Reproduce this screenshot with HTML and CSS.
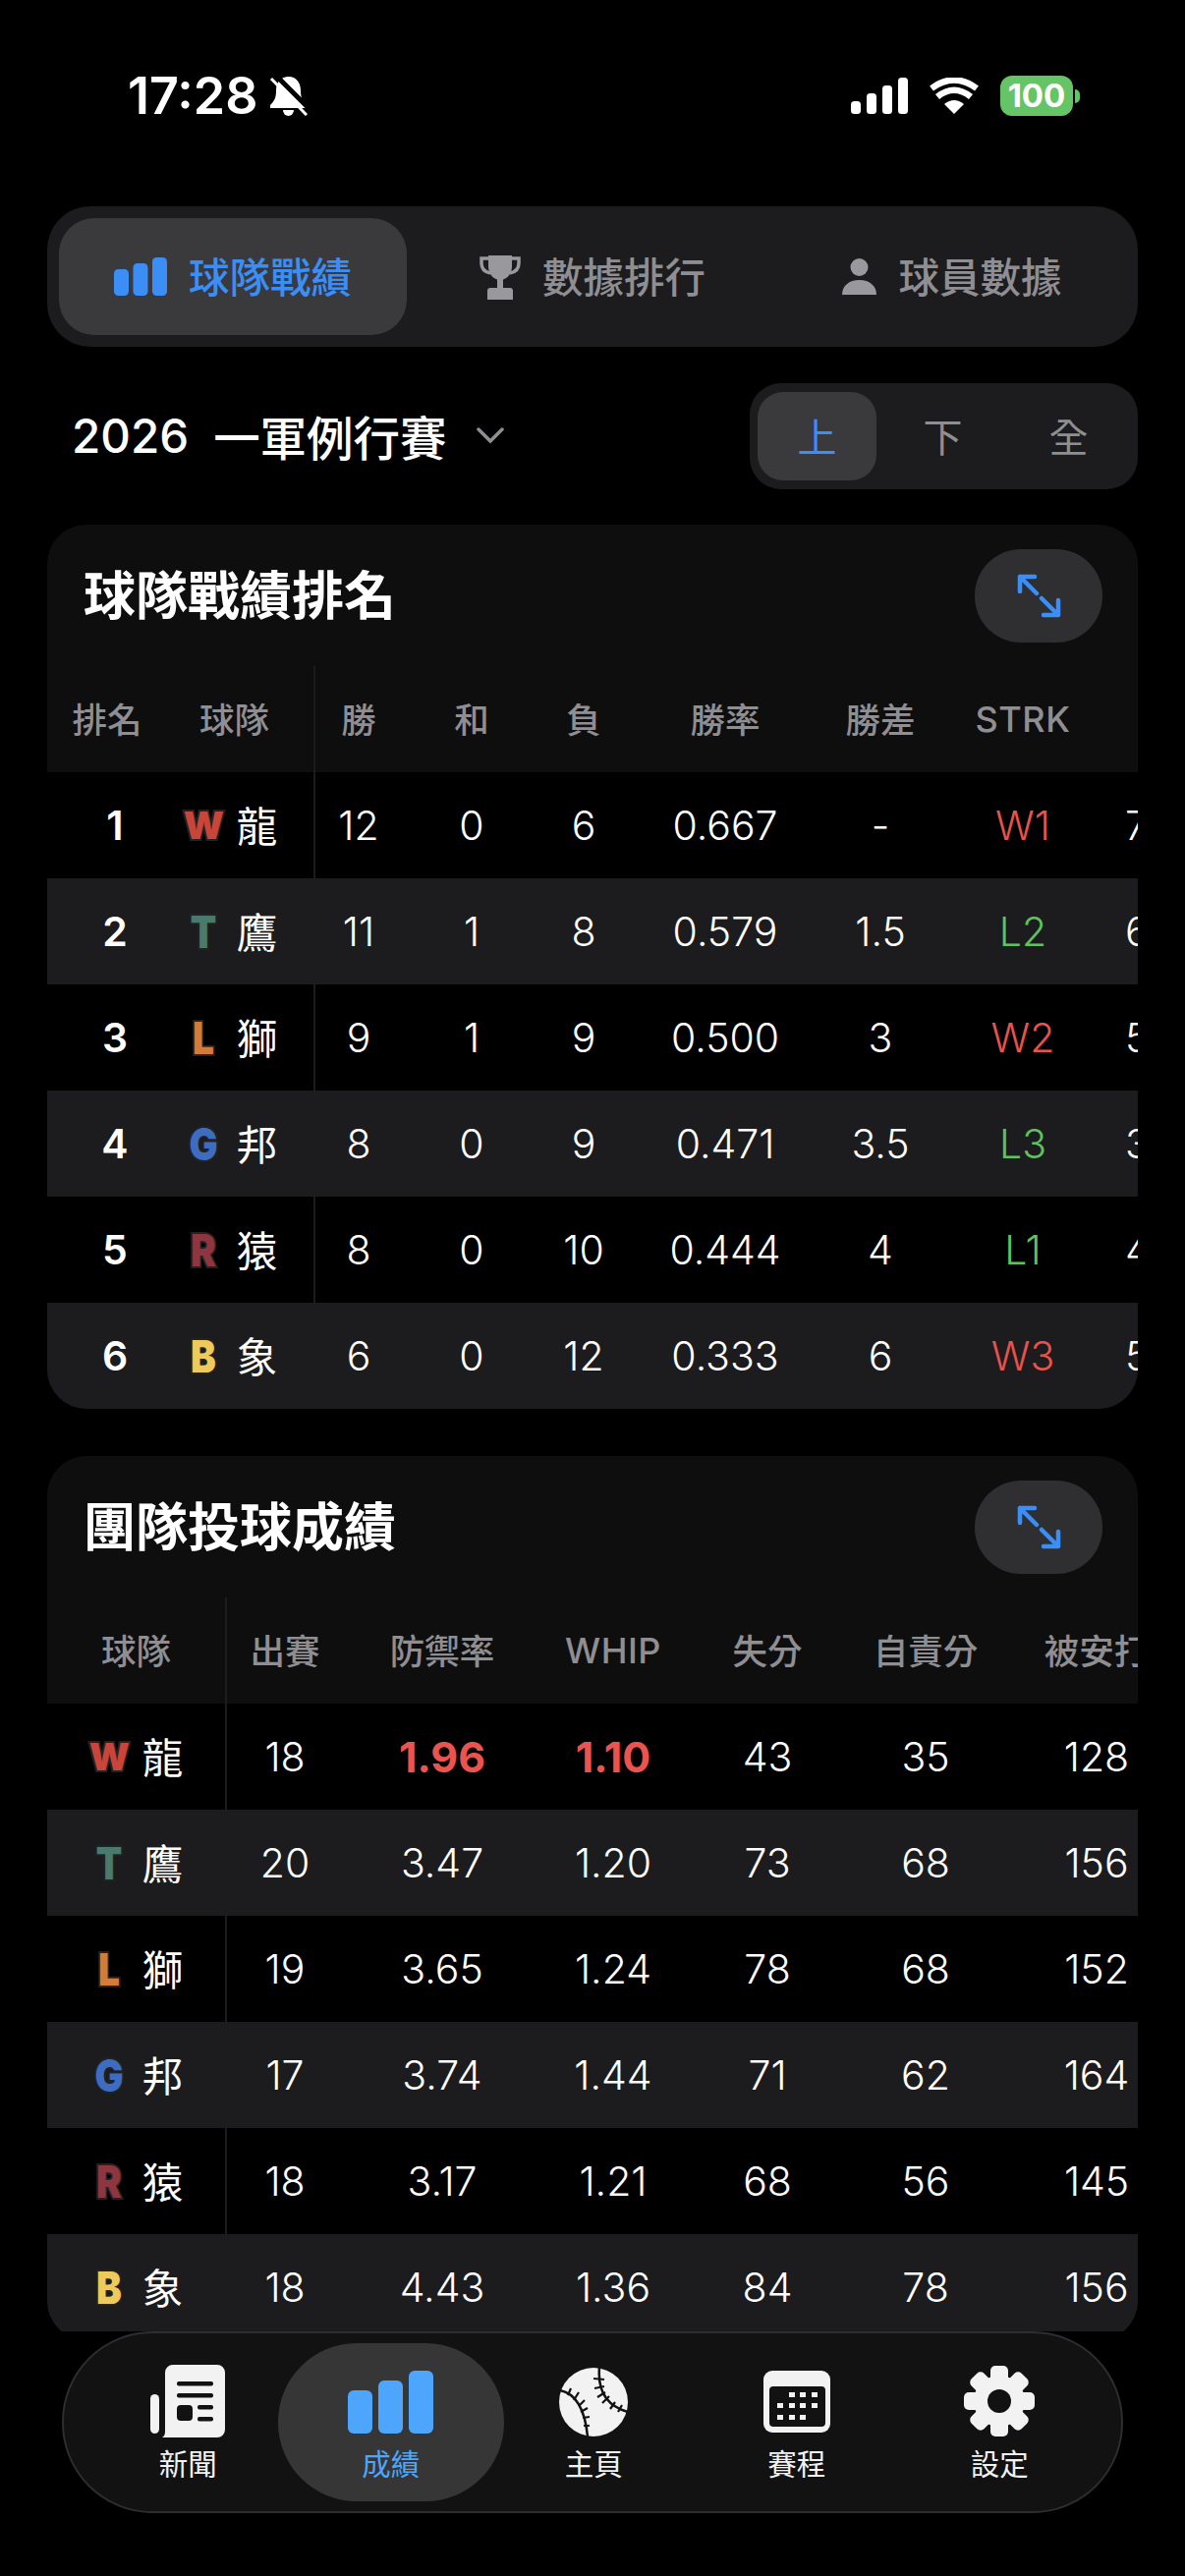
FILE: index.html
```html
<!DOCTYPE html>
<html lang="zh-Hant">
<head>
    <meta charset="UTF-8">
    <meta name="viewport" content="width=device-width, initial-scale=1.0">
    <title>球隊戰績</title>
    <link rel="stylesheet" href="styles.css">
</head>
<body>
    <div class="content">
        <div class="status-bar">
            <span class="time">17:28</span>
            <svg class="bell" viewBox="0 0 39 41">
                <path fill="#fff" d="M20 1c-8 0-13 6-13 14 0 8-2 11-6 15v3h37v-3c-4-4-6-7-6-15 0-8-5-14-12-14z"/>
                <path fill="#fff" d="M14 35a5.5 6 0 0 0 11 0z"/>
                <path stroke="#000" stroke-width="5" d="M6 -1L40 33"/>
                <path stroke="#fff" stroke-width="3" d="M2 3L38 40"/>
            </svg>
            <span class="status-spacer"></span>
            <svg class="signal" viewBox="0 0 58 37" fill="#fff">
                <rect x="0" y="24" width="10" height="13" rx="3.5"/>
                <rect x="16" y="16" width="10" height="21" rx="3.5"/>
                <rect x="32" y="8" width="10" height="29" rx="3.5"/>
                <rect x="48" y="0" width="10" height="37" rx="3.5"/>
            </svg>
            <svg class="wifi" viewBox="0 0 50 37">
                <path fill="#fff" d="M25 37L15 27Q25 19 35 27z"/>
                <path fill="none" stroke="#fff" stroke-width="6.5" d="M8 19.5Q25 6 42 19.5"/>
                <path fill="none" stroke="#fff" stroke-width="6.5" d="M2 11Q25 -6 48 11"/>
            </svg>
            <span class="battery">100</span>
            <span class="battery-nub"></span>
        </div>

        <div class="tabs">
            <div class="tab active">
                <svg class="tab-bars" viewBox="0 0 54 39" fill="#3a8ef6">
                    <rect x="0" y="12" width="15" height="27" rx="4.5"/>
                    <rect x="19.5" y="6" width="15" height="33" rx="4.5"/>
                    <rect x="39" y="0" width="15" height="39" rx="4.5"/>
                </svg>
                <span>球隊戰績</span>
            </div>
            <div class="tab">
                <svg class="tab-trophy" viewBox="0 0 42 46" fill="#98989d">
                    <path d="M9 1h24v11c0 7-4 12-9 13.5V34h-6v-8.500C13 24 9 19 9 12z"/>
                    <path d="M8 37a3 3 0 0 1 3-3h20a3 3 0 0 1 3 3v9H8z"/>
                    <path fill="none" stroke="#98989d" stroke-width="3.5" d="M10 4H2v5c0 6 4 9 9 10M32 4h8v5c0 6-4 9-9 10"/>
                </svg>
                <span>數據排行</span>
            </div>
            <div class="tab">
                <svg class="tab-person" viewBox="0 0 35 37" fill="#98989d">
                    <circle cx="17.500" cy="9" r="9"/>
                    <path d="M0 37c0-9 7-15 17.500-15S35 28 35 37z"/>
                </svg>
                <span>球員數據</span>
            </div>
        </div>

        <div class="filter-row">
            <div class="season">
                <span class="season-year">2026</span>
                <span>一軍例行賽</span>
                <svg class="chevron" viewBox="0 0 30 18"><path fill="none" stroke="#8e8e93" stroke-width="3.500" stroke-linecap="round" d="M3 3L15 15L27 3"/></svg>
            </div>
            <div class="half-switch">
                <span class="half active">上</span>
                <span class="half">下</span>
                <span class="half">全</span>
            </div>
        </div>

        <section class="card standings">
            <div class="card-head">
                <h2>球隊戰績排名</h2>
                <button class="expand">
                    <svg viewBox="0 0 45 45"><path d="M3 18V3H18M3 3L20 20M42 27V42H27M42 42L25 25"/></svg>
                </button>
            </div>
            <div class="row head">
                <div>排名</div><div class="team-col">球隊</div><div>勝</div><div>和</div><div>負</div><div>勝率</div><div>勝差</div><div class="latin">STRK</div><div></div>
            </div>
            <div class="row">
                <div class="rank">1</div><div class="team-col"><span class="logo logo-w small">W</span><span class="name">龍</span></div><div>12</div><div>0</div><div>6</div><div>0.667</div><div>-</div><div class="win">W1</div><div class="cut">7</div>
            </div>
            <div class="row">
                <div class="rank">2</div><div class="team-col"><span class="logo logo-t">T</span><span class="name">鷹</span></div><div>11</div><div>1</div><div>8</div><div>0.579</div><div>1.5</div><div class="lose">L2</div><div class="cut">6</div>
            </div>
            <div class="row">
                <div class="rank">3</div><div class="team-col"><span class="logo logo-l">L</span><span class="name">獅</span></div><div>9</div><div>1</div><div>9</div><div>0.500</div><div>3</div><div class="win">W2</div><div class="cut">5</div>
            </div>
            <div class="row">
                <div class="rank">4</div><div class="team-col"><span class="logo logo-g">G</span><span class="name">邦</span></div><div>8</div><div>0</div><div>9</div><div>0.471</div><div>3.5</div><div class="lose">L3</div><div class="cut">3</div>
            </div>
            <div class="row">
                <div class="rank">5</div><div class="team-col"><span class="logo logo-r">R</span><span class="name">猿</span></div><div>8</div><div>0</div><div>10</div><div>0.444</div><div>4</div><div class="lose">L1</div><div class="cut">4</div>
            </div>
            <div class="row">
                <div class="rank">6</div><div class="team-col"><span class="logo logo-b">B</span><span class="name">象</span></div><div>6</div><div>0</div><div>12</div><div>0.333</div><div>6</div><div class="win">W3</div><div class="cut">5</div>
            </div>
        </section>

        <section class="card pitching">
            <div class="card-head">
                <h2>團隊投球成績</h2>
                <button class="expand">
                    <svg viewBox="0 0 45 45"><path d="M3 18V3H18M3 3L20 20M42 27V42H27M42 42L25 25"/></svg>
                </button>
            </div>
            <div class="row head">
                <div class="team-col">球隊</div><div>出賽</div><div>防禦率</div><div class="latin">WHIP</div><div>失分</div><div>自責分</div><div>被安打</div>
            </div>
            <div class="row">
                <div class="team-col"><span class="logo logo-w small">W</span><span class="name">龍</span></div><div>18</div><div class="best">1.96</div><div class="best">1.10</div><div>43</div><div>35</div><div>128</div>
            </div>
            <div class="row">
                <div class="team-col"><span class="logo logo-t">T</span><span class="name">鷹</span></div><div>20</div><div>3.47</div><div>1.20</div><div>73</div><div>68</div><div>156</div>
            </div>
            <div class="row">
                <div class="team-col"><span class="logo logo-l">L</span><span class="name">獅</span></div><div>19</div><div>3.65</div><div>1.24</div><div>78</div><div>68</div><div>152</div>
            </div>
            <div class="row">
                <div class="team-col"><span class="logo logo-g">G</span><span class="name">邦</span></div><div>17</div><div>3.74</div><div>1.44</div><div>71</div><div>62</div><div>164</div>
            </div>
            <div class="row">
                <div class="team-col"><span class="logo logo-r">R</span><span class="name">猿</span></div><div>18</div><div>3.17</div><div>1.21</div><div>68</div><div>56</div><div>145</div>
            </div>
            <div class="row">
                <div class="team-col"><span class="logo logo-b">B</span><span class="name">象</span></div><div>18</div><div>4.43</div><div>1.36</div><div>84</div><div>78</div><div>156</div>
            </div>
        </section>
    </div>

    <nav class="bottom-nav">
        <div class="nav-item">
            <svg class="ico-news" viewBox="0 0 76 74">
                <rect x="0" y="30" width="9" height="40" rx="4.500" fill="#f2f2f2"/>
                <path fill="#f2f2f2" d="M23 0h45a8 8 0 0 1 8 8v58a8 8 0 0 1-8 8H12c2-1 3-3 3-6V8a8 8 0 0 1 8-8z"/>
                <g fill="#121212">
                    <rect x="27" y="17" width="37" height="4.500" rx="2"/>
                    <rect x="27" y="29" width="37" height="4.500" rx="2"/>
                    <rect x="27" y="41" width="16" height="16" rx="4"/>
                    <rect x="48" y="41" width="16" height="4.500" rx="2"/>
                    <rect x="48" y="53" width="16" height="4.500" rx="2"/>
                </g>
            </svg>
            <span>新聞</span>
        </div>
        <div class="nav-item active">
            <svg class="ico-bars" viewBox="0 0 87 64" fill="#4da6fb">
                <rect x="0" y="20" width="25" height="44" rx="6"/>
                <rect x="31" y="10" width="25" height="54" rx="6"/>
                <rect x="62" y="0" width="25" height="64" rx="6"/>
            </svg>
            <span>成績</span>
        </div>
        <div class="nav-item">
            <svg class="ico-ball" viewBox="0 0 70 70">
                <circle cx="35" cy="35" r="35" fill="#f2f2f2"/>
                <g fill="none" stroke="#121212" stroke-width="2.500">
                    <path d="M1 23Q25 28 29 70"/>
                    <path d="M41 0Q38 36 70 45"/>
                    <path stroke-width="2.200" d="M12 21L9 28M20 25L15 33M26 33L20 39M29 41L22 45M31 50L24 51M31 59L25 59M35 11L46 12M36 21L46 19M39 30L47 25M44 36L51 29M52 42L57 35M60 45L64 38"/>
                </g>
            </svg>
            <span>主頁</span>
        </div>
        <div class="nav-item">
            <svg class="ico-cal" viewBox="0 0 68 63">
                <rect width="68" height="63" rx="9" fill="#f2f2f2"/>
                <rect x="6" y="16" width="57" height="41" rx="4" fill="#121212"/>
                <g fill="#f2f2f2">
                    <rect x="26" y="22" width="6" height="5"/><rect x="37" y="22" width="6" height="5"/><rect x="49" y="22" width="6" height="5"/>
                    <rect x="14" y="33" width="6" height="5"/><rect x="26" y="33" width="6" height="5"/><rect x="37" y="33" width="6" height="5"/><rect x="49" y="33" width="6" height="5"/>
                    <rect x="14" y="45" width="6" height="5"/><rect x="26" y="45" width="6" height="5"/><rect x="37" y="45" width="6" height="5"/>
                </g>
            </svg>
            <span>賽程</span>
        </div>
        <div class="nav-item">
            <svg class="ico-gear" viewBox="0 0 72 72">
                <g fill="#f2f2f2">
                    <circle cx="36" cy="36" r="26"/>
                    <rect x="27" y="0" width="18" height="72" rx="5"/>
                    <rect x="27" y="0" width="18" height="72" rx="5" transform="rotate(45 36 36)"/>
                    <rect x="27" y="0" width="18" height="72" rx="5" transform="rotate(90 36 36)"/>
                    <rect x="27" y="0" width="18" height="72" rx="5" transform="rotate(135 36 36)"/>
                </g>
                <circle cx="36" cy="36" r="12" fill="#121212"/>
            </svg>
            <span>設定</span>
        </div>
    </nav>
</body>
</html>
```

FILE: styles.css
```css
* {
    margin: 0;
    padding: 0;
    box-sizing: border-box;
}

body {
    width: 1206px;
    height: 2622px;
    overflow: hidden;
    background: #000;
    color: #fff;
    font-family: Inter, "Noto Sans CJK TC", sans-serif;
}

.content {
    height: 2373px;
    overflow: hidden;
}

/* status bar */
.status-bar {
    height: 210px;
    padding: 77px 0 0 130px;
    display: flex;
    align-items: flex-start;
}

.time {
    font-size: 52px;
    line-height: 41px;
    font-weight: 600;
}

.bell {
    width: 39px;
    height: 41px;
    margin-left: 12px;
}

.status-spacer {
    flex: 1;
}

.signal {
    width: 58px;
    height: 37px;
    margin-top: 2px;
}

.wifi {
    width: 50px;
    height: 37px;
    margin: 2px 0 0 22px;
}

.battery {
    width: 74px;
    height: 41px;
    margin-left: 22px;
    background: #65c466;
    border-radius: 12px;
    font-size: 33px;
    font-weight: 700;
    line-height: 41px;
    text-align: center;
}

.battery-nub {
    width: 5px;
    height: 14px;
    margin: 14px 107px 0 2px;
    background: #65c466;
    border-radius: 0 7px 7px 0;
}

/* main tabs */
.tabs {
    margin: 0 48px;
    height: 143px;
    padding: 12px;
    background: #1c1c1e;
    border-radius: 44px;
    display: grid;
    grid-template-columns: repeat(3, 1fr);
    gap: 12px;
}

.tab {
    display: flex;
    align-items: center;
    justify-content: center;
    gap: 22px;
    border-radius: 36px;
    font-size: 41.500px;
    font-weight: 500;
    color: #8e8e93;
}

.tab span {
    padding-bottom: 4px;
}

.tab.active {
    background: #3a3a3c;
    color: #3a8ef6;
}

.tab-bars {
    width: 54px;
    height: 39px;
}

.tab-trophy {
    width: 42px;
    height: 46px;
}

.tab-person {
    width: 35px;
    height: 37px;
}

/* season and half filter */
.filter-row {
    margin: 37px 48px 36px;
    display: flex;
    align-items: center;
    justify-content: space-between;
}

.season {
    padding: 0 0 2px 25px;
    display: flex;
    align-items: center;
    font-size: 47.500px;
    font-weight: 500;
}

.season-year {
    margin-right: 25px;
}

.chevron {
    width: 30px;
    height: 18px;
    margin-left: 29px;
}

.half-switch {
    width: 395px;
    height: 108px;
    padding: 9px 8px;
    background: #1c1c1e;
    border-radius: 32px;
    display: grid;
    grid-template-columns: repeat(3, 121px);
    gap: 7px;
}

.half {
    padding-bottom: 3px;
    display: flex;
    align-items: center;
    justify-content: center;
    border-radius: 26px;
    font-size: 40px;
    color: #8e8e93;
}

.half.active {
    background: #3a3a3c;
    color: #3a8ef6;
}

/* cards */
.card {
    margin: 0 48px 48px;
    height: 900px;
    background: #0e0e0f;
    border-radius: 40px;
    overflow: hidden;
}

.card-head {
    height: 144px;
    padding: 0 36px 0 37px;
    display: flex;
    align-items: center;
    justify-content: space-between;
}

.card-head h2 {
    padding-bottom: 6px;
    font-size: 53px;
    font-weight: 700;
}

.expand {
    width: 130px;
    height: 95px;
    border: none;
    border-radius: 47px;
    background: #2f2f31;
    display: flex;
    align-items: center;
    justify-content: center;
}

.expand svg {
    width: 45px;
    height: 45px;
    fill: none;
    stroke: #3a8ef6;
    stroke-width: 4.500;
    stroke-linecap: round;
    stroke-linejoin: round;
}

/* table rows */
.row {
    height: 108px;
    display: grid;
    background: #000;
    font-size: 41px;
    font-weight: 350;
    white-space: nowrap;
}

.row:nth-child(even) {
    background: #1c1c1e;
}

.row.head {
    background: #0e0e0f;
    color: #8e8e93;
    font-size: 35.500px;
    font-weight: 500;
}

.row > div {
    display: flex;
    align-items: center;
    justify-content: center;
}

.row.head > div {
    padding-bottom: 4px;
}

.row.head > .latin {
    padding-bottom: 0;
    font-size: 36px;
    letter-spacing: 0.500px;
}

.standings .row {
    grid-template-columns: 122px 151px 88px 142px 86px 202px 114px 176px 29px;
}

.pitching .row {
    grid-template-columns: 183px 118px 202px 146px 168px 154px 194px;
}

.row > .team-col {
    border-right: 2px solid #1c1c1e;
    gap: 14px;
}

.row.head > .team-col {
    font-size: 35.500px;
}

.standings .row > .team-col {
    padding-right: 20px;
}

.standings .row.head > .team-col {
    padding-right: 12px;
}

.name {
    padding-bottom: 2px;
    font-size: 41.500px;
    font-weight: 400;
}

.row > .rank {
    padding-left: 16px;
    font-weight: 600;
}

.row > .cut {
    justify-content: flex-start;
    padding-left: 16px;
}

.win {
    color: #e8534c;
}

.lose {
    color: #5fc25f;
}

.row > .best {
    color: #ea534e;
    font-size: 43px;
    font-weight: 700;
}

/* team letters */
.logo {
    width: 40px;
    text-align: center;
    font-size: 46px;
    line-height: 1;
    font-weight: 900;
    -webkit-text-stroke: 4px #222;
    paint-order: stroke fill;
    transform: scaleX(0.84);
}

.logo.small {
    font-size: 38px;
    transform: none;
}

.logo-w { color: #c8453a; }
.logo-t { color: #4a7a6d; }
.logo-l { color: #d27b3a; }
.logo-g { color: #3d6cc0; }
.logo-r { color: #8f3540; }
.logo-b { color: #eec95b; }

/* bottom nav */
.bottom-nav {
    margin: 0 63px;
    height: 185px;
    padding: 10px 23px;
    background: #121212;
    border: 2px solid #2e2e30;
    border-radius: 92px;
    display: grid;
    grid-template-columns: repeat(5, 206.500px);
}

.nav-item {
    padding-top: 22px;
    display: flex;
    flex-direction: column;
    align-items: center;
    font-size: 29.500px;
    line-height: 36px;
    color: #f2f2f2;
}

.nav-item svg {
    margin-bottom: 9px;
}

.nav-item.active {
    margin: 0 -12px;
    background: #363636;
    border-radius: 80px;
    color: #4da6fb;
}

.ico-news {
    width: 76px;
    height: 74px;
}

.nav-item .ico-bars {
    width: 87px;
    height: 64px;
    margin-top: 6px;
    margin-bottom: 13px;
}

.nav-item .ico-ball {
    width: 70px;
    height: 70px;
    margin-top: 3px;
    margin-bottom: 10px;
}

.nav-item .ico-cal {
    width: 68px;
    height: 63px;
    margin-top: 6px;
    margin-bottom: 14px;
}

.nav-item .ico-gear {
    width: 72px;
    height: 72px;
    margin-top: 1px;
    margin-bottom: 10px;
}
```
